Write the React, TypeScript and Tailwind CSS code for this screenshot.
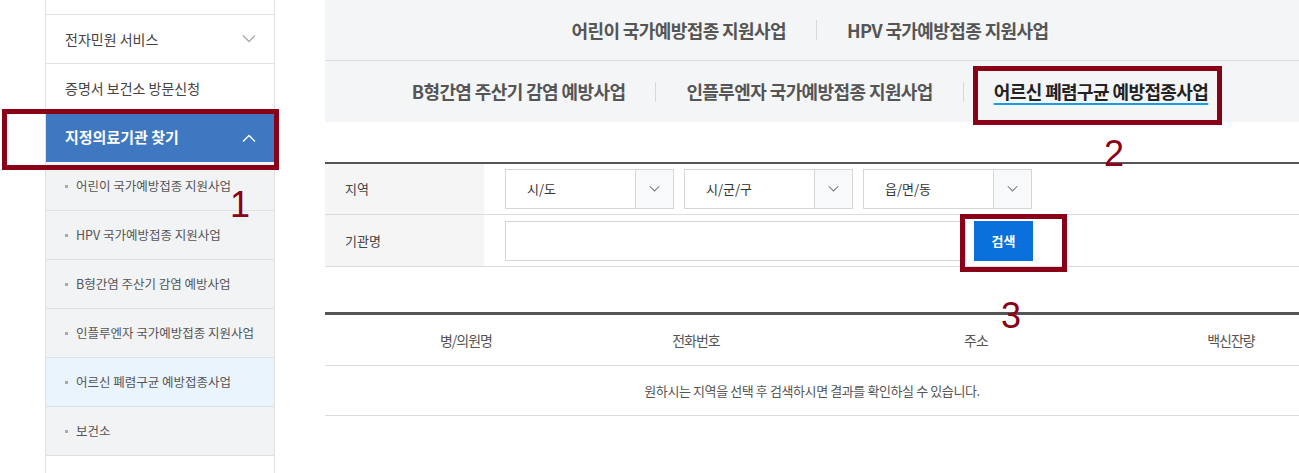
import React from 'react';

const FONT = { fontFamily: '"Noto Sans CJK KR", "Noto Sans", sans-serif' };
const NUM_FONT = { fontFamily: '"Liberation Sans", sans-serif' };

const subMenu = [
  '어린이 국가예방접종 지원사업',
  'HPV 국가예방접종 지원사업',
  'B형간염 주산기 감염 예방사업',
  '인플루엔자 국가예방접종 지원사업',
  '어르신 폐렴구균 예방접종사업',
  '보건소',
];

const Chevron = ({ up = false, className = '' }: { up?: boolean; className?: string }) => (
  <svg className={className} width="14" height="8" viewBox="0 0 14 8" fill="none" stroke="currentColor" strokeWidth="1.3">
    <path d={up ? 'M1 7.5L7 1.5l6 6' : 'M1 0.5l6 6 6-6'} />
  </svg>
);

const Select = ({ label }: { label: string }) => (
  <div className="flex h-[40px] w-[169px] border border-[#d6d6d6] bg-white">
    <div className="flex flex-1 items-center pl-[21px] text-[13px] text-[#333]">{label}</div>
    <div className="flex w-[38px] items-center justify-center border-l border-[#d6d6d6] bg-[#f8f9fb] text-[#777]">
      <Chevron className="w-[11px]" />
    </div>
  </div>
);

const Tab = ({ label, first = false, active = false }: { label: string; first?: boolean; active?: boolean }) => (
  <div className="flex items-center">
    {!first && <div className="h-[20px] w-px bg-[#d5d8dd]" />}
    <div className="px-[30px]">
      <span
        className={`text-[18px] font-bold tracking-[-0.6px] ${
          active
            ? 'text-[#222] underline decoration-[#1b9be0] decoration-2 underline-offset-[4px]'
            : 'text-[#555]'
        }`}
      >
        {label}
      </span>
    </div>
  </div>
);

export default function App() {
  return (
    <div className="relative flex h-[473px] w-full overflow-hidden bg-white" style={FONT}>
      {/* Sidebar */}
      <div className="ml-[45px] flex w-[230px] shrink-0 flex-col border-x border-[#e1e1e1]">
        <div className="h-[15px] border-b border-[#e1e1e1]" />
        <div className="flex h-[49px] items-center justify-between border-b border-[#e1e1e1] pl-[19px] pr-[18px] text-[14px] text-[#444]">
          <span>전자민원 서비스</span>
          <Chevron className="text-[#aaa]" />
        </div>
        <div className="flex h-[49px] items-center border-b border-[#e1e1e1] pl-[19px] text-[14px] text-[#444]">
          증명서 보건소 방문신청
        </div>
        <div className="flex h-[49px] items-center justify-between bg-[#3f78c1] pl-[19px] pr-[18px] text-[15px] font-bold text-white">
          <span>지정의료기관 찾기</span>
          <Chevron up className="text-white" />
        </div>
        {subMenu.map((item, i) => (
          <div
            key={item}
            className={`flex h-[49px] items-center gap-[8px] border-b border-[#e1e1e1] pl-[19px] text-[12.5px] text-[#555] ${
              i === 4 ? 'bg-[#eaf4fd]' : 'bg-[#f2f3f5]'
            }`}
          >
            <span className="h-[3px] w-[3px] bg-[#aaa]" />
            <span>{item}</span>
          </div>
        ))}
      </div>

      {/* Main */}
      <div className="ml-[50px] flex flex-1 flex-col">
        <div className="bg-[#f4f5f7]">
          <div className="flex h-[61px] items-center justify-center border-b border-[#dcdde0] pr-[4px]">
            <Tab first label="어린이 국가예방접종 지원사업" />
            <Tab label="HPV 국가예방접종 지원사업" />
          </div>
          <div className="flex h-[61px] items-center justify-center pr-[4px]">
            <Tab first label="B형간염 주산기 감염 예방사업" />
            <Tab label="인플루엔자 국가예방접종 지원사업" />
            <Tab active label="어르신 폐렴구균 예방접종사업" />
          </div>
        </div>

        {/* Search form */}
        <div className="mt-[40px] border-t-2 border-[#555]">
          <div className="flex h-[51px] border-b border-[#dcdcdc]">
            <div className="flex w-[159px] items-center bg-[#f5f5f5] pl-[20px] text-[13px] text-[#444]">지역</div>
            <div className="flex items-center gap-[10px] pl-[21px]">
              <Select label="시/도" />
              <Select label="시/군/구" />
              <Select label="읍/면/동" />
            </div>
          </div>
          <div className="flex h-[52px] border-b border-[#dcdcdc]">
            <div className="flex w-[159px] items-center bg-[#f5f5f5] pl-[20px] text-[13px] text-[#444]">기관명</div>
            <div className="flex items-center gap-[8px] pl-[21px]">
              <div className="h-[40px] w-[461px] border border-[#d6d6d6] bg-white" />
              <button className="flex h-[40px] w-[59px] items-center justify-center bg-[#0a70dc] text-[13px] font-bold text-white">
                검색
              </button>
            </div>
          </div>
        </div>

        {/* Result table */}
        <div className="mt-[45px] border-t-[3px] border-[#555] text-[#555]">
          <div className="flex h-[51px] items-center border-b border-[#dcdcdc] text-[14px] tracking-[-1px]">
            <div className="w-[282px] text-center">병/의원명</div>
            <div className="w-[178px] text-center">전화번호</div>
            <div className="w-[382px] text-center">주소</div>
            <div className="w-[128px] text-center">백신잔량</div>
          </div>
          <div className="flex h-[50px] items-center justify-center border-b border-[#dcdcdc] text-[13px] tracking-[-0.4px]">
            원하시는 지역을 선택 후 검색하시면 결과를 확인하실 수 있습니다.
          </div>
        </div>
      </div>

      {/* Annotations */}
      <div className="pointer-events-none absolute left-[2px] top-[109px] h-[61px] w-[277px] border-[5px] border-[#8a0016]" />
      <div className="pointer-events-none absolute left-[973px] top-[66px] h-[59px] w-[249px] border-[5px] border-[#8a0016]" />
      <div className="pointer-events-none absolute left-[960px] top-[214px] h-[58px] w-[107px] border-[5px] border-[#8a0016]" />
      <span className="absolute left-[230px] top-[187px] text-[36px] leading-none text-[#8a0016]" style={NUM_FONT}>1</span>
      <span className="absolute left-[1104px] top-[136px] text-[36px] leading-none text-[#8a0016]" style={NUM_FONT}>2</span>
      <span className="absolute left-[1001px] top-[298px] text-[36px] leading-none text-[#8a0016]" style={NUM_FONT}>3</span>
    </div>
  );
}
